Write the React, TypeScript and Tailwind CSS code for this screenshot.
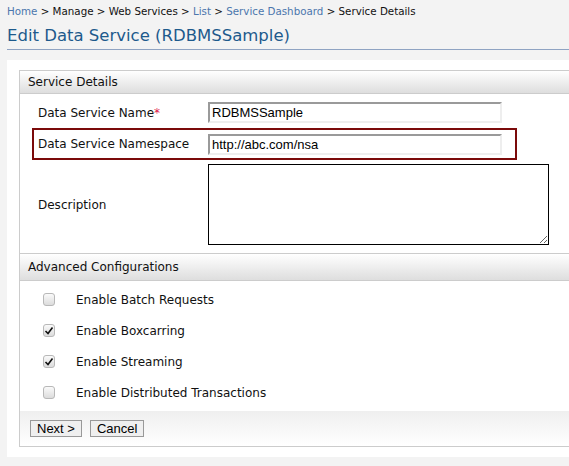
import React from "react";

const options = [
  { label: "Enable Batch Requests", checked: false },
  { label: "Enable Boxcarring", checked: true },
  { label: "Enable Streaming", checked: true },
  { label: "Enable Distributed Transactions", checked: false },
];

const Check = ({ checked }: { checked: boolean }) => (
  <span className="w-[12px] h-[13px] rounded-[3px] border border-[#b8b8b8] bg-linear-to-b from-[#fafafa] to-[#dcdcdc] flex items-center justify-center">
    {checked && (
      <svg width="10" height="10" viewBox="0 0 10 10">
        <path d="M1.5 5 L4 7.5 L8.5 1.5" stroke="#111" strokeWidth="1.6" fill="none" />
      </svg>
    )}
  </span>
);

const App = () => {
  return (
    <div className="w-[569px] h-[466px] overflow-hidden bg-[#f3f3f3] font-['DejaVu_Sans',sans-serif] text-[#111]">
      <div className="pl-[7px] pt-[3px] h-[20px] text-[10.3px] leading-[16px]">
        <span className="text-[#4b76ad]">Home</span> &gt; Manage &gt; Web Services &gt;{" "}
        <span className="text-[#4b76ad]">List</span> &gt;{" "}
        <span className="text-[#4b76ad]">Service Dashboard</span> &gt; Service Details
      </div>
      <h1 className="ml-[7px] h-[30px] pt-[3px] border-b border-[#8fa3c2] text-[16.5px] leading-[26px] text-[#1d5a8c]">
        Edit Data Service (RDBMSSample)
      </h1>
      <div className="ml-[7px] mt-[10px] w-[640px] bg-white px-[12px] py-[10px]">
        <div className="border border-[#cccccc]">
          <div className="h-[23px] pl-[8px] border-b border-[#cccccc] bg-linear-to-b from-white to-[#dedede] text-[12px] leading-[22px]">
            Service Details
          </div>
          <div className="pt-[8px] pb-[8px] text-[12px]">
            <div className="flex items-center ml-[18px] h-[21px]">
              <span className="w-[170px]">
                Data Service Name<span className="text-[#e0204a]">*</span>
              </span>
              <input
                readOnly
                value="RDBMSSample"
                className="w-[294px] h-[21px] px-[2px] border-[2px] border-t-[#9a9a9a] border-l-[#9a9a9a] border-b-[#eeeeee] border-r-[#eeeeee] font-['Liberation_Sans',sans-serif] text-[13px] text-black outline-none"
              />
            </div>
            <div className="mt-[5px] ml-[12px] w-[485px] h-[32px] border-2 border-[#7b0a0a] pl-[4px] flex items-center">
              <span className="w-[170px]">Data Service Namespace</span>
              <input
                readOnly
                value="http://abc.com/nsa"
                className="w-[294px] h-[21px] px-[2px] border-[2px] border-t-[#9a9a9a] border-l-[#9a9a9a] border-b-[#eeeeee] border-r-[#eeeeee] font-['Liberation_Sans',sans-serif] text-[13px] text-black outline-none"
              />
            </div>
            <div className="mt-[4px] ml-[18px] h-[81px] flex items-center">
              <span className="w-[170px]">Description</span>
              <textarea
                readOnly
                className="w-[341px] h-[81px] border border-black outline-none block"
              />
            </div>
          </div>
          <div className="h-[28px] pl-[8px] border-y border-[#cccccc] bg-linear-to-b from-white to-[#dedede] text-[12px] leading-[26px]">
            Advanced Configurations
          </div>
          <div className="pt-[3px] pb-[3px] text-[12px]">
            {options.map((o) => (
              <div key={o.label} className="h-[31px] flex items-center pl-[23px]">
                <Check checked={o.checked} />
                <span className="ml-[21px]">{o.label}</span>
              </div>
            ))}
          </div>
          <div className="h-[35px] pl-[10px] flex items-center gap-[8px] bg-linear-to-b from-[#efefef] to-white font-['Liberation_Sans',sans-serif] text-[13px]">
            <button className="h-[17px] px-[6px] border border-[#999] bg-[#efefef] leading-[15px] text-black">
              Next &gt;
            </button>
            <button className="h-[17px] px-[6px] border border-[#999] bg-[#efefef] leading-[15px] text-black">
              Cancel
            </button>
          </div>
        </div>
      </div>
    </div>
  );
};

export default App;
